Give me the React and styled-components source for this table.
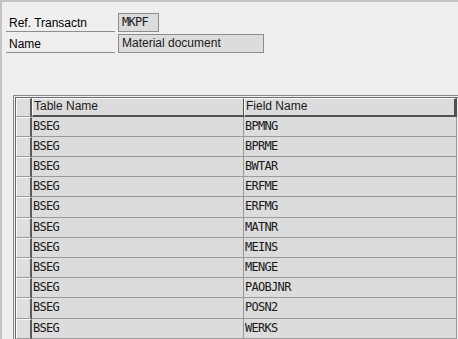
import React from "react";
import styled, { createGlobalStyle } from "styled-components";

const GlobalStyle = createGlobalStyle`
  html, body {
    margin: 0;
    padding: 0;
    background: #efefef;
    overflow: hidden;
  }
`;

const Screen = styled.div`
  width: 458px;
  height: 339px;
  box-sizing: border-box;
  margin: 0;
  border-top: 2px solid #c4c4c4;
  border-left: 2px solid #c4c4c4;
  background: #efefef;
  font-family: "Liberation Sans", Arial, sans-serif;
  font-size: 12px;
  color: #000;
  overflow: hidden;
`;

const Form = styled.div`
  display: flex;
  flex-direction: column;
  gap: 2px;
  padding: 11px 0 0 4px;
`;

const FieldRow = styled.div`
  display: flex;
  align-items: stretch;
  gap: 3px;
  height: 19px;
`;

const Label = styled.div`
  width: 109px;
  box-sizing: border-box;
  padding: 2px 0 0 3px;
  border-bottom: 1px solid #8e8e8e;
  line-height: 16px;
`;

const Value = styled.div`
  width: ${(p) => p.$width}px;
  box-sizing: border-box;
  height: 19px;
  border: 1px solid #8c8c8c;
  background: #dcdcdc;
  padding: 0 3px;
  line-height: 17px;
  font-family: ${(p) =>
    p.$mono ? '"DejaVu Sans Mono", monospace' : '"Liberation Sans", Arial, sans-serif'};
  font-size: 12px;
  letter-spacing: ${(p) => (p.$mono ? "-0.7px" : "0")};
  color: #1a1a1a;
`;

const TableFrame = styled.div`
  margin: 42px 0 0 11px;
  border-top: 1px solid #8a8a8a;
  border-left: 1px solid #8a8a8a;
  padding: 1px 0 0 1px;
`;

const Grid = styled.div`
  display: grid;
  grid-template-columns: 16px 212px 213px;
  border-left: 1px solid #6c6c6c;
  border-top: 1px solid #6c6c6c;
`;

const Corner = styled.div`
  height: 19px;
  box-sizing: border-box;
  background: #dedede;
  border-top: 1px solid #fafafa;
  border-left: 1px solid #fafafa;
  border-right: 2px solid #5a5a5a;
  border-bottom: 1px solid #9a9a9a;
`;

const HeadCell = styled.div`
  height: 19px;
  box-sizing: border-box;
  background: #dcdcdc;
  border-top: 1px solid #fafafa;
  border-left: 1px solid #fafafa;
  border-right: ${(p) => (p.$last ? "3px" : "1px")} solid #505050;
  border-bottom: 2px solid #505050;
  padding-left: 1px;
  line-height: 15px;
  color: #1a1a1a;
`;

const Selector = styled.div`
  height: ${(p) => p.$h}px;
  box-sizing: border-box;
  background: #dedede;
  border-top: 1px solid #fafafa;
  border-left: 1px solid #fafafa;
  border-right: 2px solid #5a5a5a;
  border-bottom: 1px solid #9a9a9a;
`;

const Cell = styled.div`
  height: ${(p) => p.$h}px;
  box-sizing: border-box;
  background: #dcdcdc;
  border-right: 1px solid #9a9a9a;
  border-bottom: 1px solid #9a9a9a;
  padding-left: 1px;
  line-height: 19px;
  font-family: "DejaVu Sans Mono", monospace;
  font-size: 12px;
  letter-spacing: -0.7px;
  color: #1a1a1a;
`;

const rows = [
  ["BSEG", "BPMNG"],
  ["BSEG", "BPRME"],
  ["BSEG", "BWTAR"],
  ["BSEG", "ERFME"],
  ["BSEG", "ERFMG"],
  ["BSEG", "MATNR"],
  ["BSEG", "MEINS"],
  ["BSEG", "MENGE"],
  ["BSEG", "PAOBJNR"],
  ["BSEG", "POSN2"],
  ["BSEG", "WERKS"],
];

export default function App() {
  return (
    <>
      <GlobalStyle />
      <Screen>
        <Form>
          <FieldRow>
            <Label>Ref. Transactn</Label>
            <Value $width={41} $mono>MKPF</Value>
          </FieldRow>
          <FieldRow>
            <Label>Name</Label>
            <Value $width={146}>Material document</Value>
          </FieldRow>
        </Form>
        <TableFrame>
          <Grid>
            <Corner />
            <HeadCell>Table Name</HeadCell>
            <HeadCell $last>Field Name</HeadCell>
            {rows.map(([table, field], i) => {
              const h = i % 5 === 4 ? 21 : 20;
              return (
                <React.Fragment key={i}>
                  <Selector $h={h} />
                  <Cell $h={h}>{table}</Cell>
                  <Cell $h={h}>{field}</Cell>
                </React.Fragment>
              );
            })}
          </Grid>
        </TableFrame>
      </Screen>
    </>
  );
}
